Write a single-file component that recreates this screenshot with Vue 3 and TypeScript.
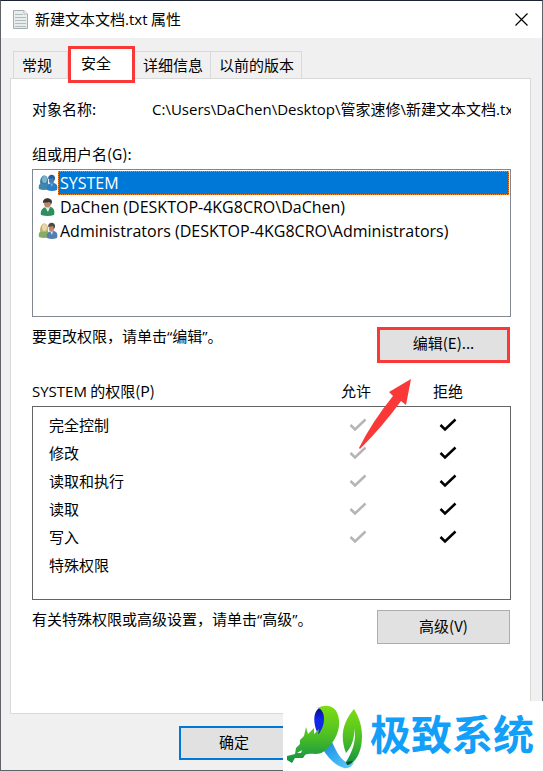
<script setup lang="ts">
import { ref } from 'vue'

interface Principal {
  name: string
  icon: 'system' | 'user' | 'admins'
}

interface Permission {
  name: string
  allow: boolean
  deny: boolean
}

const tabs: string[] = ['常规', '安全', '详细信息', '以前的版本']
const activeTab = ref('安全')

const principals: Principal[] = [
  { name: 'SYSTEM', icon: 'system' },
  { name: 'DaChen (DESKTOP-4KG8CRO\\DaChen)', icon: 'user' },
  { name: 'Administrators (DESKTOP-4KG8CRO\\Administrators)', icon: 'admins' },
]
const selected = ref('SYSTEM')

const permissions: Permission[] = [
  { name: '完全控制', allow: true, deny: true },
  { name: '修改', allow: true, deny: true },
  { name: '读取和执行', allow: true, deny: true },
  { name: '读取', allow: true, deny: true },
  { name: '写入', allow: true, deny: true },
  { name: '特殊权限', allow: false, deny: false },
]
</script>

<template>
  <main class="dialog">
    <header class="titlebar">
      <svg class="file-icon" viewBox="0 0 15 19" aria-hidden="true">
        <path d="M.5.5h10.500l3.500 3.500v14.500H.5z" fill="#e9ecec" stroke="#a5aaaa" />
        <path d="M11 .5v3.500h3.500" fill="#fff" stroke="#b4b8b8" />
        <path d="M2 4.500h8M2 7.500h11M2 10.500h11M2 13.500h11M2 16.500h11" stroke="#b3bcbc" />
      </svg>
      <h1 class="title">新建文本文档<span class="latin">.txt</span> 属性</h1>
      <button class="close" type="button" aria-label="关闭">
        <svg viewBox="0 0 13 13" aria-hidden="true"><path d="M.5.5l12 12M12.500.5l-12 12" stroke="#000" stroke-width="1.200" /></svg>
      </button>
    </header>

    <div class="body">
      <nav class="tabs" role="tablist">
        <button
          v-for="tab in tabs"
          :key="tab"
          type="button"
          role="tab"
          class="tab"
          :class="{ active: tab === activeTab }"
          :aria-selected="tab === activeTab"
          @click="activeTab = tab"
        >{{ tab }}</button>
      </nav>

      <section class="panel">
        <div class="object">
          <span class="object-label">对象名称:</span>
          <span class="object-path"><span class="latin">C:\Users\DaChen\Desktop\</span>管家速修<span class="latin">\</span>新建文本文档<span class="latin">.txt</span></span>
        </div>

        <h2 id="groups-label" class="label">组或用户名(G):</h2>
        <ul class="principals" aria-labelledby="groups-label">
          <li v-for="p in principals" :key="p.name">
            <button type="button" class="principal" :class="{ selected: p.name === selected }" @click="selected = p.name">
              <svg v-if="p.icon === 'user'" class="person-icon" viewBox="0 0 20 18" aria-hidden="true">
                <path d="M3 17c-1-4 1-7 5-8l5 0c3 1 4 4 3 8q-6 2-13 0z" fill="#2f8f5c" />
                <path d="M7 9l3 5 2-5z" fill="#e6f2e8" />
                <ellipse cx="9.500" cy="5" rx="3.500" ry="4.500" fill="#b98a6a" />
                <path d="M5 5c-1-6 9-6 9-1l-1 3c0-2-1-3-2-3-2 1-4 0-6 1z" fill="#3a3431" />
              </svg>
              <svg v-else class="person-icon" :class="p.icon" viewBox="0 0 20 18" aria-hidden="true">
                <path class="coat-a" d="M1 15c-1-4 1-6 4-7h3c3 1 3 3 3 7q-5 2-10 0z" />
                <path class="hair-a" d="M2 9c0-10 9-10 8 0l-2 1H4z" />
                <ellipse class="face-a" cx="6.500" cy="5.500" rx="2.500" ry="3.500" />
                <path class="coat-b" d="M9 16c-1-4 1-6 4-7h3c3 1 4 3 3 7q-5 2-10 0z" />
                <path class="shirt" d="M12 9l2 4 1-4z" />
                <ellipse class="face-b" cx="13.500" cy="6" rx="2.700" ry="3.700" />
                <path class="hair-b" d="M10 5c0-6 8-5 7 0l-1 2-1-3c-2 1-3 0-5 1z" />
              </svg>
              <span class="principal-name">{{ p.name }}</span>
            </button>
          </li>
        </ul>

        <div class="action">
          <p class="hint">要更改权限，请单击<span class="quote">“</span>编辑<span class="quote">”</span>。</p>
          <div class="marked">
            <button type="button" class="button highlighted">编辑(E)...</button>
            <svg class="arrow" viewBox="0 0 55 72" aria-hidden="true">
              <path d="M53 0L31 13l4 4Q14 43 1 69l1 1Q25 47 43 22l5 4z" fill="#fb3838" />
            </svg>
          </div>
        </div>

        <table class="permissions">
          <thead>
            <tr>
              <th scope="col"><span class="latin">SYSTEM</span> 的权限(P)</th>
              <th scope="col" class="mark-head">允许</th>
              <th scope="col" class="mark-head">拒绝</th>
              <th class="rest"></th>
            </tr>
          </thead>
          <tbody>
            <tr v-for="perm in permissions" :key="perm.name">
              <td>{{ perm.name }}</td>
              <td class="mark allow">
                <svg v-if="perm.allow" class="check" viewBox="0 0 18 14" role="img" aria-label="允许"><path d="M1.500 7l4.500 4.500L16.500 1.500" /></svg>
              </td>
              <td class="mark">
                <svg v-if="perm.deny" class="check" viewBox="0 0 18 14" role="img" aria-label="拒绝"><path d="M1.500 7l4.500 4.500L16.500 1.500" /></svg>
              </td>
              <td></td>
            </tr>
          </tbody>
        </table>

        <div class="action">
          <p class="hint">有关特殊权限或高级设置，请单击<span class="quote">“</span>高级<span class="quote">”</span>。</p>
          <button type="button" class="button">高级(V)</button>
        </div>
      </section>

      <footer class="footer">
        <button type="button" class="button default">确定</button>
      </footer>
    </div>

    <aside class="brand">
      <svg class="dragon" viewBox="0 0 84 70" aria-hidden="true">
        <defs>
          <linearGradient id="ribbon" x1="0" y1="0" x2="0" y2="1">
            <stop offset="0" stop-color="#7ddd12" />
            <stop offset=".5" stop-color="#4fc123" />
            <stop offset="1" stop-color="#129048" />
          </linearGradient>
          <linearGradient id="inner" x1="0" y1="0" x2="0" y2="1">
            <stop offset="0" stop-color="#0a0f7a" />
            <stop offset=".3" stop-color="#1028f0" />
            <stop offset="1" stop-color="#0c2cc0" />
          </linearGradient>
          <linearGradient id="tail" x1="0" y1="0" x2="1" y2="1">
            <stop offset="0" stop-color="#1689e0" />
            <stop offset="1" stop-color="#5fd0ff" />
          </linearGradient>
        </defs>
        <path d="M36 7C29 12 31 24 34 31l8 14 6-6C44 27 45 15 42 9z" fill="url(#inner)" />
        <path d="M40 49l9-8c4 8 7 16 14 20 3 2 7 1 8 0-2 5-6 7-10 6-10-3-15-10-21-18z" fill="url(#tail)" />
        <path d="M35 7C42 3 52 4 55 14c4 14-3 28-15 37-6 4-12 0-18 3l-2 3-8 0-3 5-5-3 0-4 8-2 1-6 4-4 0-4 4-4 2-9 2 7 6-6 0 6 5-5-1 6c4-5 8-14 5-22-2-5-5-6-8-5z" fill="url(#ribbon)" />
        <path d="M14 52l5-3-1 3z" fill="#fff" />
        <path d="M71 8C61 20 56 34 63 52 69 45 72 36 71 27c3 13-2 24-8 34l2 3c9-3 14-15 14-29C79 25 76 16 71 8z" fill="url(#ribbon)" />
        <path d="M63 61l7-1q-3 4-6 4z" fill="#0a5428" />
      </svg>
      <span class="brand-name">极致系统</span>
    </aside>
  </main>
</template>

<style>
body {
  margin: 0;
}
</style>

<style scoped>
.dialog {
  position: relative;
  box-sizing: border-box;
  min-height: 100vh;
  display: flex;
  flex-direction: column;
  border: 1px solid #5f6266;
  border-top-color: #1b2435;
  background: #f0f0f0;
  color: #000;
  font: 15px/20px "Noto Sans CJK SC", sans-serif;
}
button {
  margin: 0;
  font: inherit;
  color: inherit;
}
.latin {
  font-family: "Open Sans", sans-serif;
}
.titlebar {
  box-sizing: border-box;
  display: flex;
  align-items: center;
  height: 37px;
  padding: 0 14px 1px 12px;
  background: #fff;
}
.file-icon {
  width: 15px;
  height: 19px;
}
.title {
  flex: 1;
  margin: 0 0 0 7px;
  font: inherit;
}
.close {
  display: flex;
  padding: 0;
  border: 0;
  background: none;
}
.close svg {
  width: 13px;
  height: 13px;
}
.body {
  flex: 1;
  display: flex;
  flex-direction: column;
  padding: 8px 11px 10px 9px;
}
.tabs {
  display: flex;
  align-items: flex-end;
  height: 32px;
  padding-left: 3px;
}
.tab {
  height: 27px;
  min-width: 55px;
  padding: 0 7px 0 8px;
  border: 1px solid #d9d9d9;
  border-width: 1px 1px 0 0;
  background: #f0f0f0;
  text-align: left;
  white-space: nowrap;
}
.tab:first-child {
  border-left-width: 1px;
}
.tab.active {
  z-index: 1;
  width: 67px;
  height: 37px;
  margin-bottom: -5px;
  padding: 0 10px 4px;
  border: 3px solid #fb3838;
  background: #fff;
}
.panel {
  flex: 1;
  display: flex;
  flex-direction: column;
  padding: 20px 19px 20px 21px;
  border: 1px solid #d9d9d9;
  background: #fff;
}
.object {
  display: flex;
  white-space: nowrap;
}
.object-label {
  flex: 0 0 120px;
}
.object-path {
  flex: 1;
  overflow: hidden;
}
.label {
  margin: 25px 0 5px;
  font: inherit;
}
.principals {
  box-sizing: border-box;
  height: 148px;
  margin: 0;
  padding: 1px;
  border: 1px solid #828790;
  list-style: none;
}
.principal {
  display: flex;
  align-items: center;
  width: 100%;
  height: 24px;
  padding: 0 0 0 4px;
  border: 0;
  background: none;
  text-align: left;
}
.principal-name {
  box-sizing: border-box;
  flex: 1;
  height: 24px;
  padding: 1px;
  border: 1px solid transparent;
  font: 16px/20px "Open Sans", sans-serif;
}
.selected .principal-name {
  border: 1px dotted #ff8728;
  background: #0078d7;
  color: #fff;
}
.person-icon {
  width: 20px;
  height: 18px;
}
.admins .coat-a { fill: #83ad68; }
.admins .hair-a { fill: #c2b262; }
.admins .face-a { fill: #ead5ac; }
.admins .coat-b { fill: #537fae; }
.admins .shirt { fill: #e2e7e9; }
.admins .face-b { fill: #b88b6f; }
.admins .hair-b { fill: #554643; }
.system .coat-a { fill: #3e87ad; }
.system .hair-a { fill: #397fa5; }
.system .face-a { fill: #7db3ce; }
.system .coat-b { fill: #287dc6; }
.system .shirt { fill: #75b7e4; }
.system .face-b { fill: #437fb4; }
.system .hair-b { fill: #2561a2; }
.action {
  display: flex;
  justify-content: space-between;
  align-items: flex-start;
  padding: 10px 1px 0 0;
}
.hint {
  margin: 0;
  line-height: 18px;
}
.quote {
  font-family: "Open Sans", sans-serif;
}
.button {
  box-sizing: border-box;
  width: 133px;
  height: 34px;
  padding: 0 0 2px;
  border: 1px solid #adadad;
  background: #e1e1e1;
  text-align: center;
}
.marked {
  position: relative;
  height: 36px;
}
.button.highlighted {
  height: 36px;
  padding-bottom: 4px;
  border: 3px solid #fb3838;
}
.arrow {
  position: absolute;
  left: -19px;
  top: 52px;
  width: 55px;
  height: 72px;
}
.permissions {
  width: 100%;
  margin-top: 18px;
  border-collapse: separate;
  border-spacing: 0;
  table-layout: fixed;
}
.permissions th {
  height: 20px;
  padding: 0 0 5px;
  font-weight: normal;
  text-align: left;
  white-space: nowrap;
}
.permissions .mark-head {
  width: 92px;
  text-align: center;
}
.permissions .rest {
  width: 17px;
}
.permissions td {
  height: 28px;
  padding: 0;
}
.permissions td:first-child {
  padding-left: 16px;
  border-left: 1px solid #646464;
}
.permissions td:last-child {
  border-right: 1px solid #646464;
}
.permissions tbody tr:first-child td {
  padding-top: 4px;
  border-top: 1px solid #646464;
}
.permissions tbody tr:last-child td {
  padding-bottom: 20px;
  border-bottom: 1px solid #646464;
}
.permissions .mark.allow {
  padding-left: 4px;
}
.check {
  display: block;
  width: 18px;
  height: 14px;
  margin: 0 auto;
  fill: none;
  stroke: #000;
  stroke-width: 2.500;
}
.allow .check {
  stroke: #b5b5b5;
}
.footer {
  display: flex;
  padding: 12px 0 0 169px;
}
.button.default {
  width: 110px;
  border: 2px solid #0078d7;
}
.brand {
  position: absolute;
  right: -1px;
  bottom: -1px;
  z-index: 2;
  box-sizing: border-box;
  display: flex;
  align-items: flex-start;
  gap: 3px;
  width: 260px;
  height: 70px;
  background: #fff;
}
.dragon {
  width: 84px;
  height: 70px;
}
.brand-name {
  color: #129ffa;
  font-size: 41px;
  font-weight: 700;
  line-height: 62px;
  white-space: nowrap;
}
</style>
